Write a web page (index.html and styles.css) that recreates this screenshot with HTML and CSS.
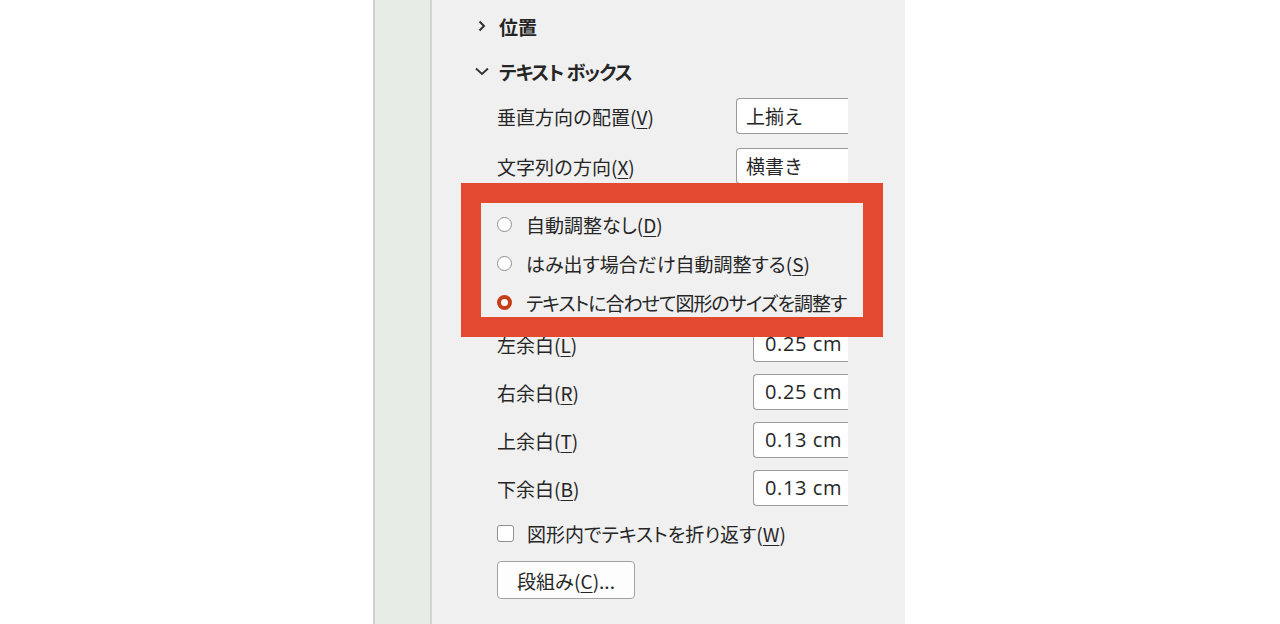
FILE: index.html
```html
<!DOCTYPE html>
<html lang="ja">
<head>
  <meta charset="UTF-8">
  <title>図形の書式設定 - テキスト ボックス</title>
  <link rel="stylesheet" href="styles.css">
</head>
<body>
  <div class="stage">
    <div class="rail"></div>

    <section class="pane">
      <div class="group-head">
        <svg class="chev" width="14" height="14" viewBox="0 0 14 14"><path d="M4.5 2.5 L9 7 L4.5 11.5" fill="none" stroke="#303030" stroke-width="2"/></svg>
        <span>位置</span>
      </div>

      <div class="group-head open">
        <svg class="chev" width="14" height="14" viewBox="0 0 14 14"><path d="M1 4.5 L7 10 L13 4.5" fill="none" stroke="#303030" stroke-width="1.8"/></svg>
        <span>テキスト ボックス</span>
      </div>

      <div class="field">
        <label>垂直方向の配置(<u>V</u>)</label>
        <div class="combo">上揃え</div>
      </div>
      <div class="field">
        <label>文字列の方向(<u>X</u>)</label>
        <div class="combo">横書き</div>
      </div>

      <div class="fit-group">
        <div class="callout"></div>
        <div class="radio-row"><span class="radio"></span>自動調整なし(<u>D</u>)</div>
        <div class="radio-row"><span class="radio"></span>はみ出す場合だけ自動調整する(<u>S</u>)</div>
        <div class="radio-row tight"><span class="radio on"></span>テキストに合わせて図形のサイズを調整す</div>
      </div>

      <div class="margins">
        <div class="field">
          <label>左余白(<u>L</u>)</label>
          <div class="spin">0.25 cm</div>
        </div>
        <div class="field">
          <label>右余白(<u>R</u>)</label>
          <div class="spin">0.25 cm</div>
        </div>
        <div class="field">
          <label>上余白(<u>T</u>)</label>
          <div class="spin">0.13 cm</div>
        </div>
        <div class="field">
          <label>下余白(<u>B</u>)</label>
          <div class="spin">0.13 cm</div>
        </div>
      </div>

      <div class="check-row"><span class="check"></span>図形内でテキストを折り返す(<u>W</u>)</div>

      <button class="btn">段組み(<u>C</u>)...</button>
    </section>
  </div>
</body>
</html>
```

FILE: styles.css
```css
* {
  margin: 0;
  padding: 0;
  box-sizing: border-box;
}

body {
  background: #ffffff;
  font-family: "Noto Sans CJK JP", "Noto Sans", sans-serif;
  font-size: 19px;
  color: #262626;
  overflow: hidden;
}

u {
  text-underline-offset: 3px;
  text-decoration-thickness: 1px;
}

.stage {
  display: flex;
  height: 624px;
  margin-left: 373px;
}

.rail {
  width: 59px;
  background: #e7ece7;
  border-left: 2px solid #cdd0cd;
  border-right: 2px solid #d2d4d2;
}

.pane {
  width: 473px;
  background: #f0f0f0;
  padding: 5px 0 0 43px;
  display: flex;
  flex-direction: column;
}

.group-head {
  display: flex;
  align-items: center;
  gap: 10px;
  height: 42px;
  font-weight: bold;
  font-size: 19px;
  font-feature-settings: "palt";
}

.group-head.open {
  margin-top: 1px;
  margin-bottom: 4px;
  height: 46px;
  letter-spacing: -1px;
}

.chev {
  flex: none;
}

.field {
  display: flex;
  align-items: center;
  justify-content: space-between;
  height: 36px;
  padding-left: 22px;
  padding-right: 57px;
}

.field + .field {
  margin-top: 14px;
}

.combo {
  width: 112px;
  height: 36px;
  line-height: 33px;
  padding-left: 9px;
  background: #ffffff;
  border: 1px solid #9a9a9a;
  border-right: none;
  border-radius: 4px 0 0 4px;
}

.fit-group {
  position: relative;
  margin-top: 25px;
  margin-left: 22px;
  display: flex;
  flex-direction: column;
  gap: 9px;
}

.callout {
  position: absolute;
  left: -36px;
  right: 22px;
  top: -26px;
  bottom: -20px;
  border: 20px solid #e44a32;
}

.radio-row {
  display: flex;
  align-items: center;
  height: 30px;
  font-feature-settings: "palt";
}

.radio-row.tight {
  letter-spacing: -1px;
}

.radio {
  flex: none;
  width: 15px;
  height: 15px;
  margin-right: 14px;
  border: 1.5px solid #8f8f8f;
  border-radius: 50%;
  background: #ffffff;
}

.radio.on {
  border: 4px solid #c53e17;
}

.margins {
  margin-top: 9px;
}

.margins .field + .field {
  margin-top: 12px;
}

.spin {
  width: 95px;
  height: 36px;
  line-height: 33px;
  padding-left: 11px;
  background: #ffffff;
  border: 1px solid #9a9a9a;
  border-right: none;
  border-radius: 4px 0 0 4px;
  font-family: "Open Sans", "Noto Sans", sans-serif;
  font-size: 20px;
  letter-spacing: 0.6px;
}

.check-row {
  display: flex;
  align-items: center;
  height: 30px;
  margin-top: 12px;
  padding-left: 22px;
  font-feature-settings: "palt";
}

.check {
  flex: none;
  width: 17px;
  height: 17px;
  margin-right: 13px;
  border: 1.5px solid #8f8f8f;
  border-radius: 3px;
  background: #ffffff;
}

.btn {
  align-self: flex-start;
  margin-top: 13px;
  margin-left: 22px;
  width: 138px;
  height: 38px;
  font: inherit;
  color: #262626;
  background: #fdfdfd;
  border: 1px solid #a3a3a3;
  border-radius: 4px;
}
```
